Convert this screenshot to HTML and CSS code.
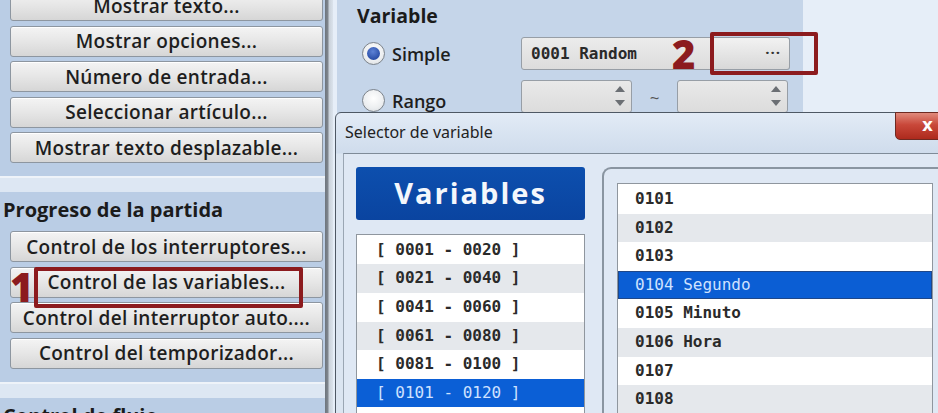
FILE: index.html
```html
<!DOCTYPE html>
<html lang="es">
<head>
<meta charset="utf-8">
<title>Variable</title>
<link rel="stylesheet" href="styles.css">
</head>
<body>
<div class="app">
  <aside class="commands">
    <div class="group group-first">
      <button class="cmd">Mostrar texto...</button>
      <button class="cmd">Mostrar opciones...</button>
      <button class="cmd">Número de entrada...</button>
      <button class="cmd">Seleccionar artículo...</button>
      <button class="cmd">Mostrar texto desplazable...</button>
    </div>
    <div class="band"></div>
    <div class="group">
      <h3 class="group-title">Progreso de la partida</h3>
      <button class="cmd">Control de los interruptores...</button>
      <button class="cmd marked">Control de las variables...<span class="mark mark-1"><b class="num">1</b></span></button>
      <button class="cmd">Control del interruptor auto....</button>
      <button class="cmd">Control del temporizador...</button>
    </div>
    <div class="band"></div>
    <h3 class="group-title">Control de flujo</h3>
  </aside>
  <div class="divider"></div>
  <main class="editor">
    <section class="var-panel">
      <h3 class="panel-title">Variable</h3>
      <div class="row">
        <label class="radio-label"><span class="radio checked"></span>Simple</label>
        <div class="field">0001 Random</div>
        <div class="pick">···<span class="mark mark-2"></span><b class="num num-2">2</b></div>
      </div>
      <div class="row row-range">
        <label class="radio-label"><span class="radio"></span>Rango</label>
        <div class="spin"><span class="arrows"><i class="up"></i><i class="down"></i></span></div>
        <span class="tilde">~</span>
        <div class="spin"><span class="arrows"><i class="up"></i><i class="down"></i></span></div>
      </div>
    </section>
  </main>

  <div class="dialog">
    <div class="titlebar">
      <span class="title">Selector de variable</span>
      <span class="close">x</span>
    </div>
    <div class="dialog-body">
      <div class="left-col">
        <div class="vars-head">Variables</div>
        <ul class="list ranges">
          <li>[ 0001 - 0020 ]</li>
          <li>[ 0021 - 0040 ]</li>
          <li>[ 0041 - 0060 ]</li>
          <li>[ 0061 - 0080 ]</li>
          <li>[ 0081 - 0100 ]</li>
          <li class="sel">[ 0101 - 0120 ]</li>
          <li>[ 0121 - 0140 ]</li>
        </ul>
      </div>
      <div class="frame">
        <ul class="list items">
          <li>0101</li>
          <li>0102</li>
          <li>0103</li>
          <li class="sel">0104 Segundo</li>
          <li>0105 Minuto</li>
          <li>0106 Hora</li>
          <li>0107</li>
          <li>0108</li>
          <li>0109</li>
        </ul>
      </div>
    </div>
  </div>
</div>
</body>
</html>
```

FILE: styles.css
```css
* { box-sizing: border-box; }
html, body {
  margin: 0;
  padding: 0;
  width: 938px;
  height: 413px;
  overflow: hidden;
  background: #e6eef8;
  font-family: "Open Sans", "Noto Sans", sans-serif;
}
.app {
  position: relative;
  display: flex;
  width: 938px;
  height: 413px;
  overflow: hidden;
}

/* ---------- left command list ---------- */
.commands {
  width: 325px;
  flex: none;
  background: #bacde5;
  display: flex;
  flex-direction: column;
}
.group {
  display: flex;
  flex-direction: column;
  gap: 4.5px;
  padding-left: 10px;
  padding-right: 2px;
}
.group-first { margin-top: -10px; }
.cmd {
  position: relative;
  height: 31px;
  width: 313px;
  padding: 0;
  border: 1px solid #8d96a0;
  border-radius: 3px;
  background: linear-gradient(#f4f4f4 0%, #e6e6e6 50%, #d6d6d6 100%);
  box-shadow: inset 0 1px 0 #fff;
  font-family: "Open Sans", sans-serif;
  font-weight: 600;
  font-size: 19px;
  letter-spacing: 0.3px;
  color: #1e1e1e;
  text-align: center;
  line-height: 28px;
  white-space: nowrap;
}
.band {
  height: 16px;
  flex: none;
  margin-top: 13px;
  background: #dde7f3;
  border-top: 2px solid #eef3f9;
}
.group-title {
  margin: 0;
  padding: 5px 0 0 3px;
  height: 34.5px;
  flex: none;
  font-size: 20px;
  font-weight: 700;
  color: #1b1b1b;
  line-height: 26px;
  white-space: nowrap;
}
.group .group-title { margin-left: -10px; }

.mark {
  position: absolute;
  z-index: 3;
  border: 4px solid #8c1b1e;
  border-radius: 2px;
  pointer-events: none;
}
.mark-1 {
  left: 23px;
  top: -1px;
  width: 269px;
  height: 41px;
}
.num {
  position: absolute;
  z-index: 3;
  color: #8c1b1e;
  font-family: "Open Sans", sans-serif;
  font-weight: 800;
  font-size: 40px;
  line-height: 40px;
}
.mark-1 .num {
  left: -28px;
  top: -4px;
}

/* ---------- divider ---------- */
.divider {
  width: 8px;
  flex: none;
  background: linear-gradient(90deg, #6d747c 0, #80878f 3px, #c9d1da 4px, #dbe3ec 8px);
}

/* ---------- editor ---------- */
.editor {
  flex: 1;
  padding-left: 4px;
  background: #e6eef8;
}
.var-panel {
  position: relative;
  width: 466px;
  height: 140px;
  background: #c5d5e9;
  padding: 3px 0 0 25px;
}
.panel-title {
  margin: 0 0 0 -5px;
  height: 30px;
  font-size: 19.5px;
  font-weight: 700;
  color: #1b1b1b;
  line-height: 26px;
}
.row {
  display: flex;
  align-items: center;
  height: 33px;
  margin-top: 4px;
}
.row-range { margin-top: 10px; }
.radio-label {
  width: 159px;
  display: flex;
  align-items: center;
  gap: 7px;
  font-size: 18px;
  font-weight: 600;
  color: #1e1e1e;
}
.row-range .radio-label { padding-top: 8px; }
.radio {
  width: 23px;
  height: 23px;
  flex: none;
  border-radius: 50%;
  border: 1px solid #7c838b;
  background: radial-gradient(circle at 50% 40%, #ffffff 0, #eceef0 60%, #d2d6da 100%);
  position: relative;
}
.radio.checked::after {
  content: "";
  position: absolute;
  left: 4px;
  top: 4px;
  width: 13px;
  height: 13px;
  border-radius: 50%;
  background: radial-gradient(circle at 45% 35%, #5d82d6 0, #2b4fa8 70%);
}
.field {
  width: 191px;
  height: 33px;
  border: 1px solid #979ea6;
  border-radius: 3px 0 0 3px;
  background: linear-gradient(#ececec, #dcdcdc);
  font-family: "DejaVu Sans Mono", monospace;
  font-weight: 700;
  font-size: 16px;
  line-height: 31px;
  padding-left: 9px;
  color: #2a2a2a;
}
.pick {
  position: relative;
  width: 78px;
  height: 33px;
  border: 1px solid #979ea6;
  border-left: none;
  border-radius: 0 3px 3px 0;
  background: linear-gradient(#f2f2f2, #d8d8d8);
  text-align: right;
  padding-right: 8px;
  font-size: 15px;
  font-weight: 700;
  letter-spacing: 1px;
  line-height: 29px;
  color: #333;
}
.mark-2 {
  left: -2px;
  top: -6px;
  width: 108px;
  height: 43px;
}
.num-2 {
  left: -40px;
  top: -4px;
}
.spin {
  position: relative;
  width: 111px;
  height: 33px;
  border: 1px solid #979ea6;
  border-radius: 3px;
  background: linear-gradient(#e9e9e9, #dcdcdc);
}
.arrows {
  position: absolute;
  right: 6px;
  top: 5px;
  display: flex;
  flex-direction: column;
  gap: 8px;
}
.arrows i {
  display: block;
  width: 0;
  height: 0;
  border-left: 5px solid transparent;
  border-right: 5px solid transparent;
}
.arrows .up { border-bottom: 6px solid #6b6f74; }
.arrows .down { border-top: 6px solid #6b6f74; }
.tilde {
  width: 45px;
  text-align: center;
  font-size: 17px;
  color: #555;
  padding-top: 2px;
}

/* ---------- dialog ---------- */
.dialog {
  position: absolute;
  left: 335px;
  top: 112px;
  width: 640px;
  height: 320px;
  border: 1px solid #4e5864;
  border-radius: 6px 0 0 0;
  background: linear-gradient(#e2ebf6, #cfdcec 40px, #dbe5f1 41px);
}
.titlebar {
  position: relative;
  height: 40px;
  padding-left: 9px;
  display: flex;
  align-items: center;
}
.title {
  font-family: "Noto Sans", sans-serif;
  font-size: 16px;
  color: #222;
  margin-top: -2px;
}
.close {
  position: absolute;
  left: 559px;
  top: -1px;
  width: 60px;
  height: 28px;
  border: 1px solid #6e2a22;
  border-radius: 0 0 0 5px;
  background: linear-gradient(#e08a7c 0, #c9483a 45%, #ad2a1d 100%);
  color: #fff;
  font-family: "DejaVu Sans", sans-serif;
  font-weight: 700;
  font-size: 17px;
  line-height: 24px;
  padding-left: 26px;
}
.dialog-body {
  margin-left: 7px;
  height: 280px;
  border-top: 1px solid #7f8b98;
  border-left: 1px solid #9aa6b3;
  background: #dfe8f4;
  display: flex;
  gap: 17px;
  padding: 13px 0 0 12px;
}
.left-col {
  width: 229px;
  display: flex;
  flex-direction: column;
  gap: 14px;
}
.vars-head {
  height: 53px;
  border-radius: 3px;
  background: linear-gradient(#0d4fae, #0a44a0);
  color: #f4f7fc;
  font-family: "Open Sans", sans-serif;
  font-weight: 700;
  font-size: 29px;
  letter-spacing: 2px;
  text-align: center;
  line-height: 52px;
}
.list {
  margin: 0;
  padding: 0;
  list-style: none;
  border: 1px solid #8f969e;
  background: #fff;
  font-family: "DejaVu Sans Mono", monospace;
  font-weight: 700;
  font-size: 16px;
  color: #2a2a2a;
  overflow: hidden;
}
.list li {
  height: 28.6px;
  line-height: 28px;
  white-space: pre;
}
.list li:nth-child(even) { background: #e5e8ec; }
.list li.sel {
  background: #0b5fd6;
  color: #cfe2ff;
  font-weight: 400;
}
.ranges { height: 200px; padding-top: 1px; }
.ranges li { padding-left: 19px; }
.frame {
  width: 360px;
  height: 280px;
  border: 2px solid #8a95a1;
  border-right: none;
  border-radius: 9px 0 0 0;
  padding: 14px 0 0 13px;
}
.items {
  width: 316px;
  height: 260px;
  padding-top: 1px;
}
.items li { padding-left: 17px; }
.items li.sel {
  background: #0b5ed4;
  outline: 1px solid #1f4788;
  outline-offset: -1px;
}
```
